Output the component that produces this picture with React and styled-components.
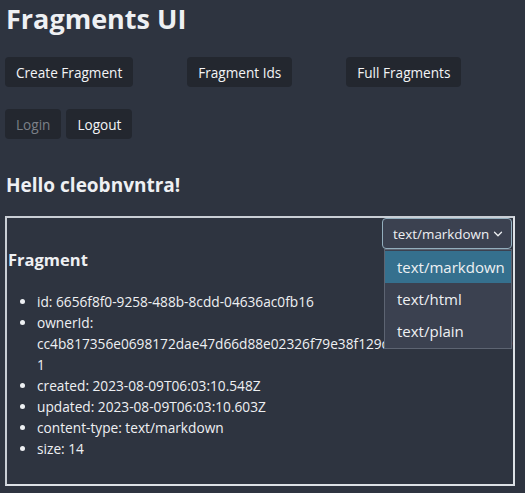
import React from 'react';
import styled, { createGlobalStyle } from 'styled-components';
import { ChevronDown } from 'lucide-react';

const GlobalStyle = createGlobalStyle`
  html, body {
    margin: 0;
    padding: 0;
    background: #2e3440;
    color: #eef0f3;
    font-family: "Open Sans", "Noto Sans", sans-serif;
  }
`;

const Page = styled.div`
  padding: 0 10px 0 5px;
  min-height: 493px;
  box-sizing: border-box;
`;

const Title = styled.h1`
  margin: 0;
  font-size: 27px;
  line-height: 38px;
  font-weight: 700;
  padding-left: 1px;
`;

const ButtonRow = styled.div`
  display: flex;
  gap: ${(p) => p.gap || '5px'};
  margin-top: ${(p) => p.top || '0'};
`;

const Button = styled.button`
  height: 30px;
  padding: 0 11px;
  border: none;
  border-radius: 4px;
  background: #23272f;
  color: ${(p) => (p.disabled ? '#7c8088' : '#f3f4f6')};
  font-family: inherit;
  font-size: 13.6px;
  cursor: ${(p) => (p.disabled ? 'default' : 'pointer')};
`;

const Greeting = styled.h2`
  margin: 33px 0 0;
  font-size: 19px;
  line-height: 26px;
  font-weight: 700;
  padding-left: 1px;
`;

const Box = styled.div`
  position: relative;
  margin-top: 18px;
  border: 2px solid #dde1e6;
  border-top-color: #c9ced5;
  border-left-color: #c9ced5;
  height: 270px;
  box-sizing: border-box;
  padding: 0 1px;
`;

const SelectRow = styled.div`
  display: flex;
  justify-content: flex-end;
`;

const Select = styled.div`
  display: flex;
  align-items: center;
  gap: 2px;
  height: 31px;
  box-sizing: border-box;
  padding: 0 6px 0 10px;
  width: 130px;
  background: #3b4150;
  border: 1px solid #93aebd;
  border-radius: 4px;
  font-size: 13.4px;
  white-space: nowrap;

  svg {
    flex-shrink: 0;
  }
`;

const Menu = styled.ul`
  position: absolute;
  top: 31px;
  right: 1px;
  width: 128px;
  margin: 0;
  padding: 1px 0;
  list-style: none;
  background: #3b4150;
  border: 1px solid #5d6472;
  box-sizing: border-box;
  z-index: 2;
`;

const MenuItem = styled.li`
  height: 32px;
  line-height: 32px;
  padding-left: 12px;
  font-size: 15px;
  background: ${(p) => (p.active ? '#35708e' : 'transparent')};
`;

const SubTitle = styled.h3`
  margin: 0;
  font-size: 16.5px;
  line-height: 22px;
  font-weight: 700;
`;

const Details = styled.ul`
  margin: 20px 0 0;
  padding-left: 29px;
  font-size: 13.7px;
  line-height: 21px;
`;

const Hash = styled.span`
  white-space: nowrap;
`;

export default function App() {
  return (
    <Page>
      <GlobalStyle />
      <Title>Fragments UI</Title>
      <ButtonRow gap="54px" top="19px">
        <Button>Create Fragment</Button>
        <Button>Fragment Ids</Button>
        <Button>Full Fragments</Button>
      </ButtonRow>
      <ButtonRow top="22px">
        <Button disabled>Login</Button>
        <Button>Logout</Button>
      </ButtonRow>
      <Greeting>Hello cleobnvntra!</Greeting>
      <Box>
        <SelectRow>
          <Select>
            <span>text/markdown</span>
            <ChevronDown size={14} strokeWidth={2.2} />
          </Select>
        </SelectRow>
        <Menu>
          <MenuItem active>text/markdown</MenuItem>
          <MenuItem>text/html</MenuItem>
          <MenuItem>text/plain</MenuItem>
        </Menu>
        <SubTitle>Fragment</SubTitle>
        <Details>
          <li>id: 6656f8f0-9258-488b-8cdd-04636ac0fb16</li>
          <li>
            ownerId:
            <br />
            <Hash>cc4b817356e0698172dae47d66d88e02326f79e38f129dffa2a2a2e9101fa99</Hash>
            <br />1
          </li>
          <li>created: 2023-08-09T06:03:10.548Z</li>
          <li>updated: 2023-08-09T06:03:10.603Z</li>
          <li>content-type: text/markdown</li>
          <li>size: 14</li>
        </Details>
      </Box>
    </Page>
  );
}
